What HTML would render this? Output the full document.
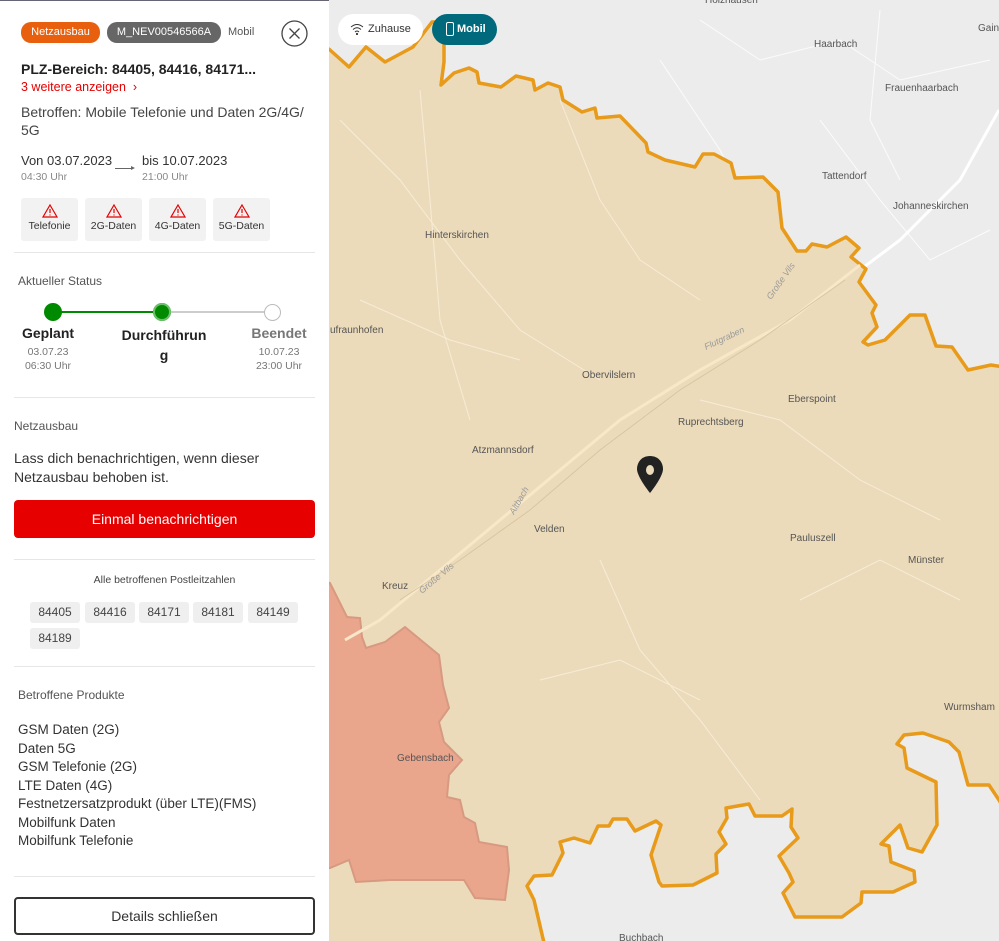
<!DOCTYPE html>
<html><head><meta charset="utf-8"><style>
*{box-sizing:border-box;margin:0;padding:0}
body{width:999px;height:941px;overflow:hidden;position:relative;font-family:"Liberation Sans",sans-serif;background:#ececec;color:#333}
#map{position:absolute;left:0;top:0}
.panel{position:absolute;left:0;top:0;width:329px;height:941px;background:#fff;border-top:1px solid #667}
.a{position:absolute;white-space:nowrap}
.pill{position:absolute;height:21px;border-radius:10px;color:#fff;font-size:11px;line-height:21px;text-align:center}
.hr{position:absolute;left:14px;width:301px;height:1px;background:#e6e6e6}
.badge{position:absolute;top:197px;width:57px;height:43px;background:#f2f2f2;border-radius:3px;font-size:10.5px;text-align:center;color:#333}
.badge svg{display:block;margin:6px auto 2px}
.chip{position:absolute;width:50px;height:21px;background:#efefef;border-radius:3px;font-size:12px;line-height:21px;text-align:center;color:#444}
</style></head><body>
<svg id="map" width="999" height="941" viewBox="0 0 999 941">
<rect x="0" y="0" width="999" height="941" fill="#ececec"/>
<g stroke="#fff" stroke-width="1" fill="none" opacity=".8">
<path d="M700 20 L760 60 L840 40 L900 80 L990 60"/><path d="M660 60 L720 150 L760 230"/><path d="M820 120 L880 200 L930 260 L990 230"/><path d="M880 10 L870 120 L900 180"/>
</g>
<path d="M999 110 L960 180 L900 240 L860 270" stroke="#fff" stroke-width="3" fill="none"/>
<path d="M300 30 L330 50 L349 67 L366 47 L385 62 L413 47 L432 22 L444 22 L444 62 L441 85 L454 73 L469 68 L477 72 L479 83 L501 87 L516 76 L533 80 L535 90 L548 83 L560 87 L563 100 L582 112 L595 108 L597 118 L620 116 L646 143 L648 152 L665 160 L695 167 L703 154 L714 154 L731 163 L735 178 L763 177 L778 192 L782 228 L797 251 L806 251 L812 244 L827 247 L846 237 L859 248 L851 257 L866 269 L859 282 L876 305 L872 313 L877 327 L863 342 L868 345 L885 340 L910 315 L925 315 L936 346 L952 347 L968 370 L991 365 L1010 368 L1010 820 L999 800 L989 785 L968 785 L959 752 L949 742 L923 733 L904 735 L897 744 L904 748 L907 768 L936 782 L937 825 L922 852 L908 848 L900 825 L881 844 L889 846 L891 862 L914 871 L915 882 L893 892 L862 892 L861 903 L842 917 L795 917 L783 893 L793 882 L789 873 L779 856 L798 838 L791 827 L792 809 L782 816 L755 816 L749 804 L726 808 L727 818 L719 832 L726 844 L716 854 L717 873 L693 885 L662 886 L659 882 L651 855 L661 825 L656 821 L635 831 L627 819 L613 819 L609 826 L598 826 L590 843 L574 838 L560 842 L563 853 L552 875 L534 876 L527 886 L534 900 L548 960 L300 960 Z" fill="#ecdbba" stroke="#e89a1a" stroke-width="3.5" stroke-linejoin="round"/>
<path d="M300 570 L330 583 L347 617 L360 618 L362 637 L366 648 L385 642 L405 627 L439 655 L443 685 L449 708 L439 722 L444 742 L462 760 L449 775 L447 797 L460 800 L464 817 L475 823 L479 842 L507 847 L509 870 L505 900 L475 898 L464 880 L390 880 L356 882 L349 860 L330 868 L300 870 Z" fill="#eaa58d" stroke="#d79a80" stroke-width="2"/>
<g stroke="#f7ecd7" stroke-width="1" fill="none">
<path d="M340 120 L400 180 L460 260 L520 330 L600 380"/><path d="M420 90 L430 200 L440 320 L470 420"/><path d="M560 100 L600 200 L640 260 L700 300"/><path d="M700 400 L780 420 L860 480 L940 520"/><path d="M600 560 L640 650 L700 720 L760 800"/><path d="M360 300 L450 340 L520 360"/><path d="M800 600 L880 560 L960 600"/><path d="M540 680 L620 660 L700 700"/>
</g>
<path d="M860 265 L790 320 L700 370 L620 420 L560 470 L500 520 L440 570 L380 620 L345 640" stroke="#f8e8c8" stroke-width="3" fill="none"/>
<path d="M845 280 L760 340 L680 390 L600 450 L530 510 L460 560 L400 600" stroke="#d8c6a2" stroke-width="1" fill="none"/>
<g font-size="10" fill="#555" font-family="Liberation Sans,sans-serif">
<text x="705" y="3">Holzhausen</text><text x="814" y="47">Haarbach</text><text x="885" y="91">Frauenhaarbach</text><text x="978" y="31">Gain</text>
<text x="822" y="179">Tattendorf</text><text x="893" y="209">Johanneskirchen</text><text x="425" y="238">Hinterskirchen</text><text x="330" y="333">ufraunhofen</text>
<text x="582" y="378">Obervilslern</text><text x="788" y="402">Eberspoint</text><text x="678" y="425">Ruprechtsberg</text><text x="472" y="453">Atzmannsdorf</text>
<text x="534" y="532">Velden</text><text x="790" y="541">Pauluszell</text><text x="908" y="563">Münster</text><text x="382" y="589">Kreuz</text>
<text x="397" y="761">Gebensbach</text><text x="944" y="710">Wurmsham</text><text x="619" y="941">Buchbach</text>
</g>
<g font-size="9" fill="#9a9a9a" font-style="italic" font-family="Liberation Sans,sans-serif">
<text transform="translate(706,350) rotate(-25)">Flutgraben</text><text transform="translate(771,300) rotate(-55)">Große Vils</text>
<text transform="translate(514,515) rotate(-60)">Altbach</text><text transform="translate(422,594) rotate(-40)">Große Vils</text>
</g>
<path d="M650 456 C641 456 637 463 637 469 C637 477 650 493 650 493 C650 493 663 477 663 469 C663 463 659 456 650 456 Z" fill="#222"/>
<ellipse cx="650" cy="470" rx="4" ry="5" fill="#ecdbba"/>
</svg>
<div class="a" style="left:338px;top:14px;width:85px;height:31px;background:#fff;border-radius:16px;font-size:11px;line-height:31px;padding-left:30px;color:#333">Zuhause</div>
<svg class="a" style="left:350px;top:23px" width="14" height="12" viewBox="0 0 14 12" fill="none" stroke="#333" stroke-width="1"><path d="M1 4 Q7 -1 13 4"/><path d="M3 6.5 Q7 3 11 6.5"/><path d="M5 9 Q7 7 9 9"/><circle cx="7" cy="11" r=".6" fill="#333"/></svg>
<div class="a" style="left:432px;top:14px;width:65px;height:31px;background:#00697c;border-radius:16px;font-size:11px;line-height:31px;padding-left:25px;color:#fff;font-weight:bold">Mobil</div>
<div class="a" style="left:446px;top:22px;width:8px;height:14px;border:1.2px solid #fff;border-radius:2px"></div>

<div class="panel">
<div class="pill" style="left:21px;top:21px;width:79px;background:#e8600e">Netzausbau</div>
<div class="pill" style="left:107px;top:21px;width:114px;background:#666">M_NEV00546566A</div>
<div class="a" style="left:228px;top:25px;font-size:11px;color:#555">Mobil</div>
<svg class="a" style="left:281px;top:19px" width="27" height="27" viewBox="0 0 27 27" fill="none" stroke="#444" stroke-width="1.3"><circle cx="13.5" cy="13.5" r="12.5"/><path d="M8.5 8.5 L18.5 18.5 M18.5 8.5 L8.5 18.5"/></svg>
<div class="a" style="left:21px;top:60px;font-size:14px;font-weight:bold;color:#222">PLZ-Bereich: 84405, 84416, 84171...</div>
<div class="a" style="left:21px;top:79px;font-size:12.5px;color:#e60000">3 weitere anzeigen &nbsp;›</div>
<div class="a" style="left:21px;top:102px;font-size:14px;line-height:18px;color:#444;white-space:normal;width:290px">Betroffen: Mobile Telefonie und Daten 2G/4G/<br>5G</div>
<div class="a" style="left:21px;top:152px;font-size:13px;color:#333">Von 03.07.2023</div>
<div class="a" style="left:21px;top:170px;font-size:10.5px;color:#888">04:30 Uhr</div>
<div class="a" style="left:115px;top:167px;width:18px;height:1px;background:#666"></div>
<div class="a" style="left:131px;top:165px;border-left:4px solid #666;border-top:2.5px solid transparent;border-bottom:2.5px solid transparent"></div>
<div class="a" style="left:142px;top:152px;font-size:13px;color:#333">bis 10.07.2023</div>
<div class="a" style="left:142px;top:170px;font-size:10.5px;color:#888">21:00 Uhr</div>
<div class="badge" style="left:21px"><svg width="16" height="14" viewBox="0 0 16 14" fill="none" stroke="#e60000" stroke-width="1.2"><path d="M8 1 L15 13 L1 13 Z"/><path d="M8 5 V9 M8 10.5 V11.5"/></svg>Telefonie</div>
<div class="badge" style="left:85px"><svg width="16" height="14" viewBox="0 0 16 14" fill="none" stroke="#e60000" stroke-width="1.2"><path d="M8 1 L15 13 L1 13 Z"/><path d="M8 5 V9 M8 10.5 V11.5"/></svg>2G-Daten</div>
<div class="badge" style="left:149px"><svg width="16" height="14" viewBox="0 0 16 14" fill="none" stroke="#e60000" stroke-width="1.2"><path d="M8 1 L15 13 L1 13 Z"/><path d="M8 5 V9 M8 10.5 V11.5"/></svg>4G-Daten</div>
<div class="badge" style="left:213px"><svg width="16" height="14" viewBox="0 0 16 14" fill="none" stroke="#e60000" stroke-width="1.2"><path d="M8 1 L15 13 L1 13 Z"/><path d="M8 5 V9 M8 10.5 V11.5"/></svg>5G-Daten</div>
<div class="hr" style="top:251px"></div>
<div class="a" style="left:18px;top:273px;font-size:12px;color:#555">Aktueller Status</div>
<div class="a" style="left:53px;top:310px;width:109px;height:2px;background:#008a00"></div>
<div class="a" style="left:162px;top:310px;width:110px;height:2px;background:#ccc"></div>
<div class="a" style="left:44px;top:302px;width:18px;height:18px;border-radius:50%;background:#008a00"></div>
<div class="a" style="left:153px;top:302px;width:18px;height:18px;border-radius:50%;background:#008a00;box-shadow:0 0 0 2px #6cc06c inset"></div>
<div class="a" style="left:264px;top:303px;width:17px;height:17px;border-radius:50%;background:#fff;border:1.5px solid #bbb"></div>
<div class="a" style="left:0;top:324px;width:96px;text-align:center;font-size:14px;font-weight:bold;color:#222">Geplant</div>
<div class="a" style="left:0;top:344px;width:96px;text-align:center;font-size:10.5px;line-height:14px;color:#777">03.07.23<br>06:30 Uhr</div>
<div class="a" style="left:114px;top:324px;width:100px;text-align:center;font-size:14px;line-height:20px;font-weight:bold;color:#222">Durchführun<br>g</div>
<div class="a" style="left:229px;top:324px;width:100px;text-align:center;font-size:14px;font-weight:bold;color:#777">Beendet</div>
<div class="a" style="left:229px;top:344px;width:100px;text-align:center;font-size:10.5px;line-height:14px;color:#777">10.07.23<br>23:00 Uhr</div>
<div class="hr" style="top:396px"></div>
<div class="a" style="left:14px;top:418px;font-size:12px;color:#555">Netzausbau</div>
<div class="a" style="left:14px;top:448px;font-size:14px;line-height:18.5px;color:#333">Lass dich benachrichtigen, wenn dieser<br>Netzausbau behoben ist.</div>
<div class="a" style="left:14px;top:499px;width:301px;height:38px;background:#e60000;border-radius:4px;color:#fff;font-size:14px;line-height:38px;text-align:center">Einmal benachrichtigen</div>
<div class="hr" style="top:558px"></div>
<div class="a" style="left:14px;top:573px;width:301px;text-align:center;font-size:10.5px;color:#444">Alle betroffenen Postleitzahlen</div>
<div class="chip" style="left:30px;top:601px">84405</div>
<div class="chip" style="left:85px;top:601px">84416</div>
<div class="chip" style="left:139px;top:601px">84171</div>
<div class="chip" style="left:193px;top:601px">84181</div>
<div class="chip" style="left:248px;top:601px">84149</div>
<div class="chip" style="left:30px;top:627px">84189</div>
<div class="hr" style="top:665px"></div>
<div class="a" style="left:18px;top:687px;font-size:12px;color:#555">Betroffene Produkte</div>
<div class="a" style="left:18px;top:720px;font-size:13.5px;line-height:18.5px;color:#333">GSM Daten (2G)<br>Daten 5G<br>GSM Telefonie (2G)<br>LTE Daten (4G)<br>Festnetzersatzprodukt (über LTE)(FMS)<br>Mobilfunk Daten<br>Mobilfunk Telefonie</div>
<div class="hr" style="top:875px"></div>
<div class="a" style="left:14px;top:896px;width:301px;height:38px;border:2px solid #333;border-radius:4px;font-size:14px;line-height:34px;text-align:center;color:#333">Details schließen</div>
</div>
</body></html>
